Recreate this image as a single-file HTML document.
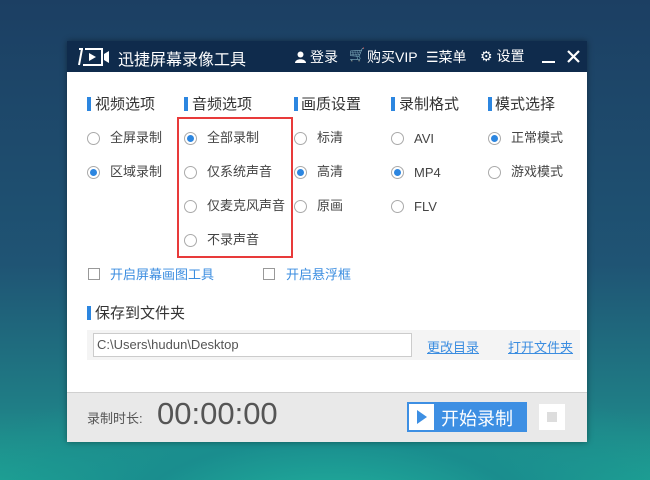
<!DOCTYPE html>
<html><head><meta charset="utf-8"><style>
*{margin:0;padding:0;box-sizing:border-box}
body{width:650px;height:480px;overflow:hidden;position:relative;font-family:"Liberation Sans","Noto Sans CJK SC",sans-serif;
background:radial-gradient(ellipse 500px 200px at 330px 520px,#22b8a0 0%,#1a8d8e 40%,transparent 80%),linear-gradient(180deg,#1c3f63 0%,#1f5474 55%,#1f7e86 85%,#1ea595 100%)}
.a{position:absolute;white-space:nowrap}
.win{position:absolute;left:67px;top:41px;width:520px;height:401px;background:#fff;box-shadow:0 0 6px rgba(0,0,0,.4)}
.tb{position:absolute;left:0;top:0;width:520px;height:31px;background:#0f2b4c;color:#fff;font-size:15px}
.h{font-size:15px;color:#333}
.bar{position:absolute;width:4px;height:14px;background:#2c86e0}
.r{position:absolute;width:13px;height:13px;border:1px solid #aaa;border-radius:50%;background:#fff}
.r.on::after{content:"";position:absolute;left:2px;top:2px;width:7px;height:7px;border-radius:50%;background:#2c86e0}
.t{font-size:13px;color:#444;line-height:16px}
.t.l{top:auto}
.cb{position:absolute;width:12px;height:12px;border:1px solid #999;background:#fff}
.lk{font-size:13px;color:#3b8de0}
</style></head><body>
<div class="win">
<div class="tb">
<svg class="a" style="left:10px;top:6px" width="34" height="20" viewBox="0 0 34 20"><path d="M2 2h4M5 2l-3 16M8 2h17v16H6" stroke="#fff" stroke-width="2" fill="none"/><path d="M12 6l7 4-7 4z" fill="#fff"/><path d="M27 7l5-3v12l-5-3z" fill="#fff"/></svg>
<div class="a" style="left:51px;top:5px;font-size:16px">迅捷屏幕录像工具</div>
<svg class="a" style="left:228px;top:10px" width="11" height="12"><circle cx="5.5" cy="3.5" r="3" fill="#fff"/><path d="M0 12c0-5 11-5 11 0z" fill="#fff"/></svg>
<div class="a" style="left:243px;top:6px;font-size:14px">登录</div>
<div class="a" style="left:282px;top:6px;font-size:13px">🛒</div>
<div class="a" style="left:300px;top:6px;font-size:14px">购买VIP</div>
<div class="a" style="left:359px;top:6px;font-size:14px">☰菜单</div>
<div class="a" style="left:413px;top:5px;font-size:14px">⚙ 设置</div>
<div class="a" style="left:475px;top:20px;width:13px;height:2px;background:#fff"></div>
<svg class="a" style="left:500px;top:9px" width="13" height="13"><path d="M1 1l11 11M12 1L1 12" stroke="#fff" stroke-width="2.2"/></svg>
</div>
<div class="bar" style="left:20px;top:56px"></div><div class="a h" style="left:28px;top:52px">视频选项</div>
<div class="bar" style="left:117px;top:56px"></div><div class="a h" style="left:125px;top:52px">音频选项</div>
<div class="bar" style="left:227px;top:56px"></div><div class="a h" style="left:234px;top:52px">画质设置</div>
<div class="bar" style="left:324px;top:56px"></div><div class="a h" style="left:332px;top:52px">录制格式</div>
<div class="bar" style="left:421px;top:56px"></div><div class="a h" style="left:428px;top:52px">模式选择</div>
<div class="r" style="left:20px;top:91px"></div><div class="a t" style="left:43px;top:89px">全屏录制</div>
<div class="r on" style="left:20px;top:125px"></div><div class="a t" style="left:43px;top:123px">区域录制</div>
<div class="r on" style="left:117px;top:91px"></div><div class="a t" style="left:140px;top:89px">全部录制</div>
<div class="r" style="left:117px;top:125px"></div><div class="a t" style="left:140px;top:123px">仅系统声音</div>
<div class="r" style="left:117px;top:159px"></div><div class="a t" style="left:140px;top:157px">仅麦克风声音</div>
<div class="r" style="left:117px;top:193px"></div><div class="a t" style="left:140px;top:191px">不录声音</div>
<div class="a" style="left:110px;top:76px;width:116px;height:141px;border:2px solid #e83a3a"></div>
<div class="r" style="left:227px;top:91px"></div><div class="a t" style="left:250px;top:89px">标清</div>
<div class="r on" style="left:227px;top:125px"></div><div class="a t" style="left:250px;top:123px">高清</div>
<div class="r" style="left:227px;top:159px"></div><div class="a t" style="left:250px;top:157px">原画</div>
<div class="r" style="left:324px;top:91px"></div><div class="a t" style="left:347px;top:90px">AVI</div>
<div class="r on" style="left:324px;top:125px"></div><div class="a t" style="left:347px;top:124px">MP4</div>
<div class="r" style="left:324px;top:159px"></div><div class="a t" style="left:347px;top:158px">FLV</div>
<div class="r on" style="left:421px;top:91px"></div><div class="a t" style="left:444px;top:89px">正常模式</div>
<div class="r" style="left:421px;top:125px"></div><div class="a t" style="left:444px;top:123px">游戏模式</div>
<div class="cb" style="left:21px;top:227px"></div><div class="a lk" style="left:43px;top:223px">开启屏幕画图工具</div>
<div class="cb" style="left:196px;top:227px"></div><div class="a lk" style="left:219px;top:223px">开启悬浮框</div>
<div class="bar" style="left:20px;top:265px"></div><div class="a h" style="left:28px;top:261px">保存到文件夹</div>
<div class="a" style="left:20px;top:289px;width:493px;height:30px;background:#f4f4f4"></div>
<div class="a" style="left:26px;top:292px;width:319px;height:24px;background:#fff;border:1px solid #ccc;font-size:13px;color:#555;padding:3px 3px">C:\Users\hudun\Desktop</div>
<div class="a lk" style="left:360px;top:296px;text-decoration:underline">更改目录</div>
<div class="a lk" style="left:441px;top:296px;text-decoration:underline">打开文件夹</div>
<div class="a" style="left:0;top:351px;width:520px;height:50px;background:#e9e9e9;border-top:1px solid #d0d0d0"></div>
<div class="a" style="left:20px;top:367px;font-size:13px;color:#555">录制时长:</div>
<div class="a" style="left:90px;top:355px;font-size:31px;color:#555">00:00:00</div>
<div class="a" style="left:340px;top:361px;width:120px;height:30px;background:#3d8fe3"></div>
<div class="a" style="left:342px;top:363px;width:25px;height:26px;background:#fff"></div>
<svg class="a" style="left:350px;top:369px" width="10" height="14"><path d="M0 0l10 7-10 7z" fill="#3d8fe3"/></svg>
<div class="a" style="left:374px;top:364px;font-size:18px;color:#fff">开始录制</div>
<div class="a" style="left:472px;top:363px;width:26px;height:26px;background:#fff"></div>
<div class="a" style="left:480px;top:371px;width:10px;height:10px;background:#ddd"></div>
</div>
</body></html>
